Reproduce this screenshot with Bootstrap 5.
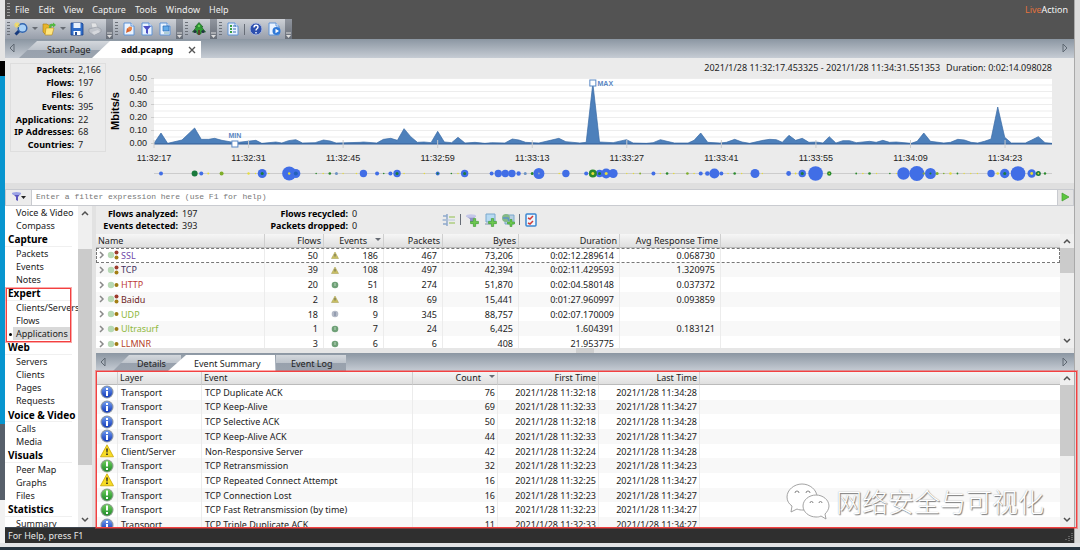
<!DOCTYPE html>
<html lang="en">
<head>
<meta charset="utf-8">
<meta name="viewport" content="width=device-width, initial-scale=1">
<title>add.pcapng</title>
<link href="https://cdn.jsdelivr.net/npm/bootstrap@5.3.0/dist/css/bootstrap.min.css" rel="stylesheet">
<style>
body{font-family:"Noto Sans","Open Sans",sans-serif;font-size:9px;line-height:12px;color:#222;background:#e3e4e6}
button{font:inherit;color:inherit;background:none;border:0;padding:0}
svg{display:block;flex:none}
.desk{height:100vh;min-height:550px;border-bottom:3px solid #26343f;padding-bottom:4px}
.edge-l,.edge-r{flex:none}
.edge-l{width:5px;background:linear-gradient(#e4e4e4 0 61px,#000 61px 76px,#0795cf 76px 424px,#57606b 424px 500px,#f2f2f2 500px)}
.edge-r{width:6px;background:linear-gradient(90deg,#a9a9a9 0 1px,#dcdcdc 1px)}
.app{background:#ebebeb;min-width:0}
.topbar{background:#535353;height:39px;color:#eee}
.menu{height:19px;padding-left:2px;gap:9px}
.menu button{line-height:14px}
.menu .grip{margin-right:-4px;background:repeating-linear-gradient(#a0a0a0 0 1px,transparent 1px 3px)}
.brandtxt{font-family:"Open Sans",sans-serif;color:#fff;line-height:20px;padding-right:6px}
.brandtxt b{font-weight:400;color:#e8743c}
.grip{width:3px;height:14px;background:repeating-linear-gradient(#6c7179 0 1px,transparent 1px 3px)}
.tgroup{height:20px;padding-left:2px;gap:4px;background:linear-gradient(#cdd0d6,#b1b7c0 50%,#989fab)}
.tover{width:7px;height:20px;background:linear-gradient(#91969f,#686e78);align-items:flex-end}
.tsep{width:1px;height:11px;background:#676d77}
.tabs{height:19px;background:linear-gradient(#8b96a2,#c6ccd4)}
.tabs2{height:18px}
.tab{height:17px;margin-top:2px;line-height:17px;background:linear-gradient(#d3d7dc,#bdc3cb 50%,#98a1ad 52%,#9ba4af);clip-path:polygon(18px 0,100% 0,100% 100%,0 100%)}
.tab.on{background:#fff}
.tab1{width:92px;padding-left:28px}
.tab2{width:109px;margin-left:-19px;padding:0 5px 0 29px}
.tabs2 .tab{height:16px}
.tab3{width:68px;padding-left:24px;clip-path:polygon(16px 0,100% 0,100% 100%,0 100%)}
.tab4{width:107px;margin-left:-13px;padding-left:26px}
.tab5{width:70px;margin-left:1px;padding-left:15px;clip-path:none}
.summary{height:125px}
.totals{width:96px;height:89px;margin:5px 0 0 5px;border:1px solid #dedede}
.totals table{height:87px;width:94px}
.totals td,.totals th{padding:0;line-height:12px}
.totals th{text-align:right;width:63px;color:#000}
.totals td{padding-left:4px}
.chartbox{min-width:0;padding:0 22px 0 48px}
.range{height:20px;line-height:20px;gap:6px}
.axis{font-family:"Liberation Sans",sans-serif;font-size:9px;fill:#222}
.flt{height:17px;border:1px solid #c9cbd0;background:#fff;margin-top:6px}
.strip{height:6px;background:#dfdfdf;margin-bottom:-6px}
.flt input{font-family:"Liberation Mono",monospace;font-size:8px;line-height:14px;border:0;padding:0 4px;background:#fff;outline:0;min-width:0}
.flt input::placeholder{color:#777;opacity:1}
.fbtn{width:26px;background:#ececec;border-right:1px solid #c9cbd0}
.gobtn{width:16px;background:#e3e3e3;border-left:1px solid #c9cbd0}
.mid{min-height:0}
.side{width:73px;background:#fff;overflow:hidden}
.side nav{height:324px}
.side a{flex:1 1 0;min-height:0;line-height:14px;padding-left:11px;color:#222;text-decoration:none;white-space:nowrap}
.side a.hd{font-weight:700;color:#000;padding-left:3px;margin-right:6px;border-bottom:1px solid #f0f0f0;font-size:10px;line-height:15px}
.grp4{height:54px}
.mark-red{position:absolute;border:1px solid #f34040;box-shadow:0 0 0 1px rgba(243,64,64,.45);pointer-events:none}
.g-side{inset:2px 7px -2px 1px}
.sel{background:linear-gradient(90deg,transparent 8px,#d9d9d9 8px 65px,transparent 65px)}
.sel::before{content:"";position:absolute;left:4px;top:6px;width:3px;height:3px;border-radius:50%;background:#000}
.sb{width:14px;background:#efefef;align-items:center;flex:none}
.sb i{display:block;width:14px;background:#cbcbcb}
.gut{width:4px;background:#e2e2e2;flex:none}
.stats{height:28px}
.stats dl{display:grid;grid-template-columns:82px 20px;column-gap:4px;margin:0;line-height:12px;padding-top:2px;align-content:start}
.stats dl+dl{margin-left:64px}
.stats dt{text-align:right;color:#000}.stats dd{margin:0}
.tools{margin-left:70px;gap:4px}
.grid{table-layout:fixed;width:100%;border-collapse:separate;border-spacing:0;white-space:nowrap;background:#fff}
.grid th{font-weight:400;height:14px;line-height:13px;padding:0 2px;background:linear-gradient(#f6f6f6,#dfdfdf);border-right:1px solid #cfcfcf;border-bottom:1px solid #bbb;overflow:hidden}
.grid td{padding:0 5px 0 3px;line-height:13px;border-right:1px solid #ececec;overflow:hidden}
.grid tbody tr:nth-child(even) td{background:#f8f8f8}
.grid td:last-child,.grid th:last-child{border-right:0}
.apps{height:117px}
.apps tbody tr:first-child{outline:1px dashed #777;outline-offset:-1px}
.apps-wrap{height:114px;overflow:hidden;background:#fff}
.ev{height:161px}
.ev td{padding-right:2px}
.ev td:first-child{padding-left:4px}
.split{height:5px;background:#e6e6e6}
.split i{width:18px;height:5px;background:#cfcfcf}
.g-ev{inset:0 -3px -1px 0}
.status{height:16px;background:#2f2f2f;color:#e8e8e8;border-top:1px solid #3d4650;line-height:15px;padding-left:3px}
.wm{position:absolute;right:30px;bottom:6px;gap:6px;color:#fff;pointer-events:none}
.wm span{font-family:"Noto Sans","Noto Sans CJK SC",sans-serif;font-size:26px;line-height:32px;font-weight:300;text-shadow:1px 1px 1px #777,0 0 1px #aaa}
</style>
</head>
<body>
<svg width="0" height="0" class="position-absolute" aria-hidden="true">
<defs>
<linearGradient id="gb" x2="0" y2="1"><stop stop-color="#6f9cf0"/><stop offset="1" stop-color="#1238b8"/></linearGradient>
<linearGradient id="gg" x2="0" y2="1"><stop stop-color="#6ccf5a"/><stop offset="1" stop-color="#1f8a2a"/></linearGradient>
<symbol id="page" viewBox="0 0 14 14"><path d="M2 1h7l3 3v9H2z" fill="#e9f3ff" stroke="#5f93d6"/><path d="M9 1v3h3" fill="#fff" stroke="#5f93d6"/></symbol>
<symbol id="info" viewBox="0 0 14 14"><circle cx="7" cy="7" r="6.5" fill="#8c97a8"/><circle cx="7" cy="7" r="5.4" fill="url(#gb)"/><path d="M6 3h2v2H6zM6 6h2v5H6z" fill="#fff"/></symbol>
<symbol id="ok" viewBox="0 0 14 14"><circle cx="7" cy="7" r="6.5" fill="#8ca08c"/><circle cx="7" cy="7" r="5.4" fill="url(#gg)"/><path d="M6 2.500h2v5H6zM6 9h2v2H6z" fill="#fff"/></symbol>
<symbol id="warn" viewBox="0 0 14 14"><path d="M7 .8 13.500 12.800H.5z" fill="#f7dc25" stroke="#c9a400" stroke-width=".8" stroke-linejoin="round"/><path d="M6.200 4.500h1.600l-.3 4h-1zM6.200 9.500h1.600v1.600H6.200z" fill="#222"/></symbol>
<symbol id="plus" viewBox="0 0 8 8"><path d="M3 .5h2V3h2.500v2H5v2.500H3V5H.5V3H3z" fill="#6cc84d" stroke="#3f9a34" stroke-width=".6"/></symbol>
<symbol id="up" viewBox="0 0 8 6"><path d="M1 5 4 2l3 3" fill="none" stroke="#505050" stroke-width="1.500"/></symbol>
<symbol id="dn" viewBox="0 0 8 6"><path d="M1 1l3 3 3-3" fill="none" stroke="#505050" stroke-width="1.500"/></symbol>
<symbol id="over" viewBox="0 0 7 7"><path d="M1 1h5" stroke="#ddd"/><path d="M1 3h5L3.500 6z" fill="#ddd"/></symbol>
<symbol id="car" viewBox="0 0 6 4"><path d="M0 0h6L3 3z" fill="#666b73"/></symbol>
</defs></svg>

<div class="desk d-flex">
 <div class="edge-l"></div>
 <div class="app flex-grow-1 d-flex flex-column">
  <header class="topbar d-flex justify-content-between">
   <div>
    <div class="menu d-flex align-items-center"><span class="grip"></span><button>File</button><button>Edit</button><button>View</button><button>Capture</button><button>Tools</button><button>Window</button><button>Help</button></div>
    <div class="d-flex">
     <div class="tgroup d-flex align-items-center"><span class="grip"></span>
      <button aria-label="Find"><svg width="14" height="14"><path d="M6 8 1.500 12.500" stroke="#173a7c" stroke-width="3"/><circle cx="8.500" cy="6" r="4.300" fill="#a9d1f7" stroke="#3265b0" stroke-width="1.500"/><path d="M3 0v6M0 3h6M1 1l4 4M5 1 1 5" stroke="#ffe14d" stroke-width=".9"/></svg></button>
      <svg width="6" height="4"><use href="#car"/></svg>
      <button aria-label="Open"><svg width="14" height="14"><path d="M1 2h4l1 1h3v9H3L1 10z" fill="#e7b52c" stroke="#a87b11" stroke-width=".6"/><path d="M4 6h8l-2 7H3z" fill="#ffe680" stroke="#b98b17" stroke-width=".6"/><path d="M7 6c0-4 2-5 4-4V.5L14 3l-3 2.500V4C10 4 9 4 9 6z" fill="#53b843"/></svg></button>
      <svg width="6" height="4"><use href="#car"/></svg>
      <button aria-label="Save"><svg width="14" height="14"><path d="M1 1h11l1 1v11H1z" fill="#2f6cc8" stroke="#173f8a" stroke-width=".8"/><path d="M3.500 1h7v5h-7z" fill="#e8f1fd"/><path d="M3.500 9h7v4h-7z" fill="#fff"/><path d="M5 10h2v3H5z" fill="#234f99"/></svg></button>
      <button aria-label="Print"><svg width="14" height="14" opacity=".75"><path d="M3 1h5l2 5H4z" fill="#eee" stroke="#a5a9b0" stroke-width=".6"/><path d="M1 7l8-2 4 2v3l-8 3-4-3z" fill="#c7cad0" stroke="#868c96" stroke-width=".6"/><path d="M4 10l6-2 2 2-6 3z" fill="#e5e6e9"/></svg></button>
      <span class="tover d-flex"><svg width="7" height="7"><use href="#over"/></svg></span></div>
     <div class="tgroup d-flex align-items-center"><span class="grip"></span>
      <button aria-label="Capture options"><svg width="14" height="14"><use href="#page"/><path d="m4 11 1-5 2 1 3-2-1 4-3 1z" fill="#d8602a"/><circle cx="8" cy="6.500" r="2" fill="#e98344"/></svg></button>
      <button aria-label="Filters"><svg width="14" height="14"><use href="#page"/><path d="M3 4h8L8 7.500V12l-2-1V7.500z" fill="#4b4fc4"/></svg></button>
      <button aria-label="Adapters"><svg width="14" height="14"><use href="#page"/><path d="M5 4h6v5H5z" fill="#62a9e8" stroke="#2d68b0" stroke-width=".7"/><path d="M6 11h5" stroke="#7aa"/></svg></button>
      <span class="tover d-flex"><svg width="7" height="7"><use href="#over"/></svg></span></div>
     <div class="tgroup d-flex align-items-center"><span class="grip"></span>
      <button aria-label="Tree"><svg width="14" height="14"><path d="M7 .5 11 5H9.500l4 5H9v2H5v-2H.5l4-5H3z" fill="#2f9a35" stroke="#1c6322" stroke-width=".7"/><path d="M6 8h2v5H6z" fill="#59412a"/><circle cx="3" cy="9.500" r="1.500" fill="#234"/><circle cx="11" cy="9.500" r="1.500" fill="#234"/><circle cx="7" cy="4" r="1" fill="#7fdc6b"/></svg></button>
      <span class="tover d-flex"><svg width="7" height="7"><use href="#over"/></svg></span></div>
     <div class="tgroup d-flex align-items-center"><span class="grip"></span>
      <button aria-label="Options"><svg width="14" height="14"><use href="#page"/><path d="M4 3h2v2H4zM4 6h2v2H4zM4 9h2v2H4z" fill="#3a9e45"/><path d="M7 4h3M7 7h3M7 10h3" stroke="#3a6bb5"/></svg></button>
      <span class="tsep"></span>
      <button aria-label="Help"><svg width="14" height="14"><circle cx="7" cy="7" r="6" fill="#2c4fae" stroke="#aab8dd"/><path d="M5 5.500c0-3 4-3 4-.5C9 7 7 6.500 7 8.500M7 10v1.500" fill="none" stroke="#fff" stroke-width="1.400"/></svg></button>
      <button aria-label="Start"><svg width="14" height="14"><use href="#page"/><circle cx="9.500" cy="9" r="4" fill="#2e78d8"/><path d="M8.500 6.800 12 9l-3.500 2.200z" fill="#fff"/></svg></button>
      <span class="tover d-flex"><svg width="7" height="7"><use href="#over"/></svg></span></div>
    </div>
   </div>
   <div class="brandtxt"><b>Live</b>Action</div>
  </header>
  <div class="tabs d-flex justify-content-between">
   <div class="d-flex"><svg width="14" height="19"><path d="M9 5v8L5 9z" fill="none" stroke="#5f6872"/></svg>
    <button class="tab tab1 text-start">Start Page</button>
    <button class="tab tab2 on d-flex justify-content-between align-items-center"><strong class="text-black">add.pcapng</strong><svg width="8" height="8"><path d="m1 1 6 6M7 1 1 7" stroke="#555" stroke-width="1.400"/></svg></button></div>
   <svg width="14" height="19"><path d="M3 5v8l4-4z" fill="none" stroke="#5f6872"/></svg>
  </div>

  <section class="summary d-flex flex-shrink-0">
   <div class="totals flex-shrink-0"><table>
    <tr><th>Packets:</th><td>2,166</td></tr><tr><th>Flows:</th><td>197</td></tr><tr><th>Files:</th><td>6</td></tr><tr><th>Events:</th><td>395</td></tr><tr><th>Applications:</th><td>22</td></tr><tr><th>IP Addresses:</th><td>68</td></tr><tr><th>Countries:</th><td>7</td></tr></table></div>
   <div class="chartbox flex-grow-1">
    <div class="range d-flex justify-content-end"><span>2021/1/28 11:32:17.453325 - 2021/1/28 11:34:31.551353</span><span>Duration: 0:02:14.098028</span></div>
    <svg id="chart" class="axis w-100 overflow-visible" height="105"></svg>
   </div>
  </section>
  <div class="strip"></div>
  <div class="flt d-flex flex-shrink-0">
   <button class="fbtn d-flex align-items-center justify-content-center" aria-label="Filter"><svg width="16" height="12"><path d="M1 2h9L7 6v4L5 9V6z" fill="#5a55bd"/><ellipse cx="5.500" cy="2.500" rx="4.500" ry="1.500" fill="#9aa2e6"/><path d="M10 5h5l-2.500 3z" fill="#222"/></svg></button>
   <input class="flex-grow-1" type="text" aria-label="Filter expression" placeholder="Enter a filter expression here (use F1 for help)">
   <button class="gobtn d-flex align-items-center justify-content-center" aria-label="Apply"><svg width="9" height="10"><path d="M1 1l7 4-7 4z" fill="#5cc63f" stroke="#3f9f2c" stroke-width=".7"/></svg></button>
  </div>

  <div class="mid flex-grow-1 d-flex">
   <div class="side flex-shrink-0"><nav class="d-flex flex-column">
    <a href="#">Voice &amp; Video</a><a href="#">Compass</a><a href="#" class="hd">Capture</a><a href="#">Packets</a><a href="#">Events</a><a href="#">Notes</a>
    <div class="grp4 position-relative d-flex flex-column"><a href="#" class="hd">Expert</a><a href="#">Clients/Servers</a><a href="#">Flows</a><a href="#" class="sel position-relative">Applications</a><div class="mark-red g-side"></div></div>
    <a href="#" class="hd">Web</a><a href="#">Servers</a><a href="#">Clients</a><a href="#">Pages</a><a href="#">Requests</a><a href="#" class="hd">Voice &amp; Video</a><a href="#">Calls</a><a href="#">Media</a><a href="#" class="hd">Visuals</a><a href="#">Peer Map</a><a href="#">Graphs</a><a href="#">Files</a><a href="#" class="hd">Statistics</a><a href="#">Summary</a></nav></div>
   <div class="sb d-flex flex-column"><svg class="my-1" width="8" height="6"><use href="#up"/></svg><i style="height:216px;margin-top:29px"></i><svg class="mt-auto mb-1" width="8" height="6"><use href="#dn"/></svg></div>
   <div class="gut"></div>
   <main class="flex-grow-1 d-flex flex-column" style="min-width:0">
    <div class="stats d-flex flex-shrink-0"><dl><dt>Flows analyzed:</dt><dd>197</dd><dt>Events detected:</dt><dd>393</dd></dl><dl><dt>Flows recycled:</dt><dd>0</dd><dt>Packets dropped:</dt><dd>0</dd></dl>
     <div class="tools d-flex align-items-center">
      <button aria-label="Hierarchy"><svg width="14" height="14"><path d="M1 3h4M1 7h4M1 11h4M5 1v12" stroke="#8fa9cb" stroke-width="1.500"/><path d="M7 4h6M7 10h6" stroke="#bdd59b" stroke-width="2"/><path d="M0 7h13" stroke="#b8c8dc"/></svg></button><span class="tsep"></span>
      <button aria-label="Make filter"><svg width="14" height="14"><path d="M1 3h10L8 6v4L5 9V6z" fill="#8e90c5"/><ellipse cx="6" cy="3" rx="5" ry="1.800" fill="#c5c8ea"/><use href="#plus" x="5" y="5" width="9" height="9"/></svg></button>
      <button aria-label="Insert name"><svg width="14" height="14"><path d="M3 1h9v8H3z" fill="#b7daf2" stroke="#7ba8cc"/><path d="M2 10h6v2H2z" fill="#b4bfcb"/><use href="#plus" x="5" y="5" width="9" height="9"/></svg></button>
      <button aria-label="Resolve"><svg width="14" height="14"><path d="M4 2h9v9H4z" fill="#b7cfe2" stroke="#7ba8cc"/><circle cx="5" cy="5" r="4" fill="#85b987"/><path d="M2 5h5l1 3" fill="none" stroke="#5d93c9" stroke-width="1.500"/><use href="#plus" x="6" y="6" width="8" height="8"/></svg></button><span class="tsep"></span>
      <button aria-label="Settings"><svg width="14" height="14"><rect x="2" y="1" width="10" height="12" rx="1" fill="#eef5fd" stroke="#3c86d0" stroke-width="1.500"/><path d="m4 5 2 1 3-3M4 10l2 1 3-3" fill="none" stroke="#d23b35" stroke-width="1.500"/></svg></button></div></div>
    <div class="apps-wrap d-flex flex-shrink-0">
     <table class="grid apps"><colgroup><col style="width:169px"><col style="width:59px"><col style="width:60px"><col style="width:59px"><col style="width:76px"><col style="width:101px"><col style="width:101px"><col></colgroup>
      <thead><tr><th>Name</th><th class="text-end">Flows</th><th><span class="d-flex align-items-center justify-content-end gap-2">Events<svg width="6" height="4"><use href="#car"/></svg></span></th><th class="text-end">Packets</th><th class="text-end">Bytes</th><th class="text-end">Duration</th><th class="text-end">Avg Response Time</th><th></th></tr></thead><tbody id="apps"></tbody></table>
     <div class="sb d-flex flex-column"><svg class="my-1" width="8" height="6"><use href="#up"/></svg><i style="height:25px"></i><svg class="mt-auto mb-1" width="8" height="6"><use href="#dn"/></svg></div></div>
    <div class="split d-flex justify-content-center flex-shrink-0"><i></i></div>
    <div class="tabs tabs2 d-flex justify-content-between flex-shrink-0"><div class="d-flex"><svg width="17" height="18"><path d="M9 5v8L5 9z" fill="none" stroke="#5f6872"/></svg><button class="tab tab3 text-start">Details</button><button class="tab tab4 on text-start">Event Summary</button><button class="tab tab5 text-start">Event Log</button></div><svg width="14" height="18"><path d="M3 5v8l4-4z" fill="none" stroke="#5f6872"/></svg></div>
    <div class="position-relative flex-grow-1 mid">
     <div class="d-flex h-100 overflow-hidden bg-white">
      <table class="grid ev"><colgroup><col style="width:22px"><col style="width:84px"><col style="width:211px"><col style="width:85px"><col style="width:101px"><col style="width:101px"><col></colgroup>
       <thead><tr><th></th><th>Layer</th><th>Event</th><th><span class="d-flex align-items-center justify-content-end gap-2">Count<svg width="6" height="4"><use href="#car"/></svg></span></th><th class="text-end">First Time</th><th class="text-end">Last Time</th><th></th></tr></thead><tbody id="evs"></tbody></table>
      <div class="sb d-flex flex-column"><svg class="my-1" width="8" height="6"><use href="#up"/></svg><i style="height:71px"></i><svg class="mt-auto mb-1" width="8" height="6"><use href="#dn"/></svg></div></div>
     <div class="wm d-flex align-items-center"><svg width="44" height="38" fill="#fff" stroke="#999" stroke-width=".9"><path d="M16 1C8 1 1 7 1 14c0 4 2 7 5 9l-1 6 6-3c2 1 4 1 6 1 8 0 14-6 14-13S24 1 16 1z"/><path d="M30 12c-7 0-13 5-13 11s6 11 13 11c2 0 3 0 5-1l5 3-1-5c2-2 4-5 4-8 0-6-6-11-13-11z"/><path d="M9 10a2 2 0 0 1 4 0M20 10a2 2 0 0 1 4 0M24 20a1.500 1.500 0 0 1 3 0M33 20a1.500 1.500 0 0 1 3 0" fill="none" stroke="#777"/></svg><span>网络安全与可视化</span></div>
     <div class="mark-red g-ev"></div>
    </div>
   </main>
  </div>
  <footer class="status flex-shrink-0 d-flex justify-content-between">For Help, press F1<svg width="10" height="14"><path d="M8 5v8M5 8v5M2 11v2" stroke="#999" stroke-dasharray="1 1"/></svg></footer>
 </div>
 <div class="edge-r"></div>
</div>
<script src="https://cdn.jsdelivr.net/npm/bootstrap@5.3.0/dist/js/bootstrap.bundle.min.js"></script>
<script>
const mini = {
  w:'<path d="M4 1 7.500 7.500H.5z" fill="#c9bf63" stroke="#a39a4c" stroke-width=".5"/><path d="M4 3v2.500" stroke="#665"/>',
  o:'<circle cx="4" cy="4" r="3.300" fill="#6fa077"/><path d="M4 2v3" stroke="#b9d6bd"/>',
  i:'<circle cx="4" cy="4" r="3.300" fill="#b3b9c6"/><path d="M4 2v4" stroke="#75809a"/>'};
document.getElementById('apps').innerHTML = [
 ['SSL','#6f45a8',1,50,'w',186,467,'73,206','0:02:12.289614','0.068730'],
 ['TCP','#43305e',1,39,'w',108,497,'42,394','0:02:11.429593','1.320975'],
 ['HTTP','#bd3c36',0,20,'o',51,274,'51,870','0:02:04.580148','0.037372'],
 ['Baidu','#6e2626',1,2,'w',18,69,'15,441','0:01:27.960997','0.093859'],
 ['UDP','#8fb83e',0,18,'i',9,345,'88,757','0:02:07.170009',''],
 ['Ultrasurf','#8fb83e',0,1,'o',7,24,'6,425','1.604391','0.183121'],
 ['LLMNR','#b5432a',0,3,'o',6,6,'408','21.953775','']
].map(r => `<tr><td><span class="d-flex align-items-center"><svg width="22" height="10"><path d="m1 2 3 3-3 3" fill="none" stroke="#8a8a8a" stroke-width="1.500"/><circle cx="12" cy="5" r="3.200" fill="#b7d9b4"/>${r[2]?'<circle cx="17.500" cy="2.500" r="2" fill="#9c3b2c"/><circle cx="17.500" cy="7.500" r="2" fill="#a37f14"/>':'<circle cx="17.500" cy="5" r="2" fill="#9c7d14"/>'}</svg><span style="color:${r[1]}">${r[0]}</span></span></td><td class="text-end">${r[3]}</td><td><span class="d-flex justify-content-between align-items-center ps-1"><svg width="8" height="8">${mini[r[4]]}</svg>${r[5]}</span></td>${r.slice(6).map(v=>`<td class="text-end">${v}</td>`).join('')}<td></td></tr>`).join('');

document.getElementById('evs').innerHTML = [
 ['info','Transport','TCP Duplicate ACK',76,'32:18','34:28'],
 ['info','Transport','TCP Keep-Alive',69,'32:33','34:27'],
 ['info','Transport','TCP Selective ACK',50,'32:18','34:28'],
 ['info','Transport','TCP Keep-Alive ACK',44,'32:33','34:27'],
 ['warn','Client/Server','Non-Responsive Server',42,'32:24','34:28'],
 ['ok','Transport','TCP Retransmission',32,'32:23','34:23'],
 ['warn','Transport','TCP Repeated Connect Attempt',16,'32:25','34:27'],
 ['ok','Transport','TCP Connection Lost',16,'32:23','34:27'],
 ['ok','Transport','TCP Fast Retransmission (by time)',13,'32:23','34:27'],
 ['info','Transport','TCP Triple Duplicate ACK',11,'32:33','34:27']
].map(r => `<tr><td><svg width="14" height="14"><use href="#${r[0]}"/></svg></td><td>${r[1]}</td><td>${r[2]}</td><td class="text-end">${r[3]}</td><td class="text-end">2021/1/28 11:${r[4]}</td><td class="text-end">2021/1/28 11:${r[5]}</td><td></td></tr>`).join('');

// Traffic samples: [time position 0..2697, load 0..196]
const pts = [[0,0],[21,31],[41,0],[84,10],[122,46],[142,12],[164,12],[182,15],[204,9],[244,2],[306,9],[324,0],[366,4],[384,1],[404,8],[426,11],[446,1],[484,2],[509,10],[529,7],[547,1],[619,3],[629,4],[669,1],[689,12],[711,15],[731,9],[751,44],[771,20],[791,3],[811,4],[832,2],[852,36],[872,4],[894,2],[913,18],[934,1],[964,3],[994,0],[1014,2],[1054,1],[1076,13],[1096,10],[1116,3],[1156,1],[1216,15],[1237,5],[1279,1],[1298,3],[1318,180],[1338,4],[1379,2],[1419,11],[1439,1],[1479,0],[1499,2],[1521,11],[1541,6],[1563,1],[1604,1],[1622,9],[1642,31],[1663,3],[1699,1],[1719,3],[1744,12],[1766,4],[1789,0],[1829,9],[1849,12],[1869,11],[1887,3],[1907,24],[1927,9],[1947,15],[1967,3],[1989,4],[2009,1],[2028,20],[2048,1],[2069,8],[2089,8],[2109,2],[2149,6],[2169,3],[2189,9],[2209,3],[2229,4],[2274,0],[2292,6],[2312,31],[2332,6],[2372,1],[2392,3],[2414,12],[2434,10],[2454,3],[2474,1],[2494,6],[2514,13],[2534,109],[2555,18],[2575,1],[2617,1],[2636,10],[2656,20],[2676,2],[2697,0]];
const W = 2697, pc = x => (x / W * 100).toFixed(3) + '%';
let s = '<rect width="100%" height="66" fill="#fff"/>';
for (let i = 0; i <= 10; i++) s += `<line x1="0" x2="100%" y1="${i*6.5+.5}" y2="${i*6.5+.5}" stroke="#ededed"/>`;
s += `<svg width="100%" height="66" viewBox="0 0 ${W} 198" preserveAspectRatio="none"><path d="M0 197L${pts.map(p=>p[0]+' '+(196-p[1])).join('L')}L${W} 197z" fill="#4d80bb" stroke="#3a6aa5" vector-effect="non-scaling-stroke" stroke-width=".7"/></svg><line x1="0" x2="100%" y1="66" y2="66" stroke="#2f5d99"/>`;
['0.50','0.40','0.30','0.20','0.10','0.00'].forEach((t,i)=>s+=`<text x="-7" y="${i*13+3}" text-anchor="end">${t}</text><line x1="-3" x2="0" y1="${i*13+.5}" y2="${i*13+.5}" stroke="#ccc"/>`);
['17','31','45','59','13','27','41','55','09','23'].forEach((t,i)=>{const x=pc(i*284);s+=`<line x1="${x}" x2="${x}" y1="62" y2="70" stroke="#ccc"/><text x="${x}" y="83" text-anchor="middle">11:${i<4?32:i<8?33:34}:${t}</text>`});
s += '<text transform="translate(-35 33) rotate(-90)" text-anchor="middle" font-weight="700" font-size="11" fill="#000">Mbits/s</text>';
s += `<g font-weight="700" font-size="7" fill="#5b86c2"><text x="${pc(243)}" y="60" text-anchor="middle">MIN</text><text x="${pc(1332)}" y="8">MAX</text></g><g fill="#fff" stroke="#5b8ac6"><svg x="${pc(243)}" y="66" class="overflow-visible"><rect x="-3" y="-3" width="6" height="6"/></svg><svg x="${pc(1318)}" y="5" class="overflow-visible"><rect x="-3" y="-3" width="6" height="6"/></svg></g>`;
s += '<line x1="0" x2="100%" y1="95.500" y2="95.500" stroke="#ccc"/>';
const B='#416ee6',G='#2a8a2c',Y='#e6dc3c',D='#1a7a3c',L='#7fae2a';
[[21,2,B],[122,3,D],[142,2,B],[163,1,Y],[203,2,L],[284,1.200,Y],[305,.8,Y],[325,4.500,B],[325,1.500,D],[345,.8,Y],[406,7,B],[426,4.500,B],[406,1.200,Y],[426,2,'#2460b8'],[487,.8,G],[508,.8,Y],[528,1.300,G],[548,1.500,'#6d93c4'],[568,.7,Y],[608,.8,Y],[629,3.700,B],[670,2,B],[690,.8,G],[710,2,B],[730,3.700,B],[730,1.500,D],[751,.8,Y],[812,.8,Y],[852,2,B],[852,1,D],[893,.8,G],[913,.8,Y],[933,3.700,B],[933,1.500,D],[1014,2,B],[1034,3.700,B],[1055,3.700,B],[1075,3.700,B],[1095,2.200,B],[1115,1.500,'#6d93c4'],[1136,1.500,G],[1156,5.500,B],[1156,.9,'#9ab'],[1217,.8,Y],[1237,3.700,B],[1298,2,B],[1338,3.700,B],[1318,4,G],[1318,1.500,Y],[1338,1.500,D],[1358,5,B],[1379,4.500,B],[1358,1.500,Y],[1420,.7,Y],[1440,.7,Y],[1460,.9,L],[1500,2,B],[1521,.8,Y],[1541,1.300,G],[1561,.8,Y],[1602,1.300,L],[1622,.8,Y],[1642,2,B],[1662,2.300,B],[1683,5,B],[1704,2,B],[1724,.7,Y],[1744,1.300,G],[1765,.7,Y],[1805,4.500,B],[1827,.7,Y],[1906,2.400,B],[1927,.9,Y],[1947,3.700,B],[1947,1.500,D],[1987,7.300,B],[2028,2.200,G],[2028,.7,Y],[2109,.9,G],[2129,.8,Y],[2149,1.300,G],[2170,.7,Y],[2210,.8,G],[2230,.8,Y],[2251,6.200,B],[2291,7.500,B],[2332,5.500,B],[2312,1.200,'#7fa05a'],[2332,1,D],[2352,1.500,L],[2372,.8,L],[2392,1.300,Y],[2413,.9,G],[2433,.7,Y],[2453,.7,Y],[2473,.7,Y],[2514,3.700,B],[2534,1.300,Y],[2555,4.700,B],[2555,1.500,D],[2595,7.300,B],[2636,4.200,B],[2636,1.400,Y],[2656,2.500,D],[2656,.9,Y],[2676,1.200,G]
].forEach(d=>s+=`<circle cx="${pc(d[0])}" cy="95.500" r="${d[1]}" fill="${d[2]}"/>`);
document.getElementById('chart').innerHTML = s;
</script>
</body>
</html>
